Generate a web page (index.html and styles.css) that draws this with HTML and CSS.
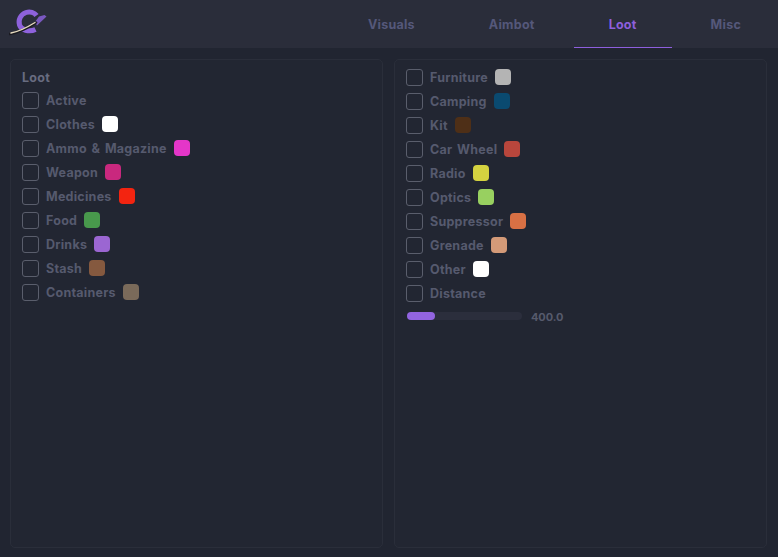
FILE: index.html
```html
<!DOCTYPE html>
<html lang="en">
<head>
<meta charset="utf-8">
<title>Loot</title>
<link rel="stylesheet" href="styles.css">
</head>
<body>
<header class="topbar">
  <svg class="logo" width="38" height="30" viewBox="0 0 38 30" aria-hidden="true">
    <path d="M27.5 8.5C25.5 5.5 21 4 17 5.5C11.5 7.5 9 13 10.5 18C12 23 20 25.5 26.5 22.5" fill="none" stroke="#8e62dc" stroke-width="5"/>
    <path d="M28 18.5L37.5 9.5L35.5 8L30 9.5L26 15Z" fill="#7a58c0"/>
    <path d="M1 27C9 25.5 19 21 27 15.5" fill="none" stroke="#1a1a20" stroke-width="2.6" stroke-linecap="round"/>
    <path d="M2 26C10 24.5 18 20.5 26 15.5" fill="none" stroke="#e8dcc0" stroke-width="1.4" stroke-linecap="round"/>
  </svg>
  <nav class="tabs">
    <a class="tab">Visuals</a>
    <a class="tab">Aimbot</a>
    <a class="tab tab-active">Loot</a>
    <a class="tab">Misc</a>
  </nav>
</header>
<main class="content">
  <section class="panel">
    <div class="panel-title">Loot</div>
    <div class="row"><span class="check"></span><span class="label">Active</span></div>
    <div class="row"><span class="check"></span><span class="label">Clothes</span><span class="swatch c-white"></span></div>
    <div class="row"><span class="check"></span><span class="label">Ammo &amp; Magazine</span><span class="swatch c-ammo"></span></div>
    <div class="row"><span class="check"></span><span class="label">Weapon</span><span class="swatch c-weapon"></span></div>
    <div class="row"><span class="check"></span><span class="label">Medicines</span><span class="swatch c-med"></span></div>
    <div class="row"><span class="check"></span><span class="label">Food</span><span class="swatch c-food"></span></div>
    <div class="row"><span class="check"></span><span class="label">Drinks</span><span class="swatch c-drinks"></span></div>
    <div class="row"><span class="check"></span><span class="label">Stash</span><span class="swatch c-stash"></span></div>
    <div class="row"><span class="check"></span><span class="label">Containers</span><span class="swatch c-cont"></span></div>
  </section>
  <section class="panel panel-right">
    <div class="row"><span class="check"></span><span class="label">Furniture</span><span class="swatch c-furn"></span></div>
    <div class="row"><span class="check"></span><span class="label">Camping</span><span class="swatch c-camp"></span></div>
    <div class="row"><span class="check"></span><span class="label">Kit</span><span class="swatch c-kit"></span></div>
    <div class="row"><span class="check"></span><span class="label">Car Wheel</span><span class="swatch c-car"></span></div>
    <div class="row"><span class="check"></span><span class="label">Radio</span><span class="swatch c-radio"></span></div>
    <div class="row"><span class="check"></span><span class="label">Optics</span><span class="swatch c-optics"></span></div>
    <div class="row"><span class="check"></span><span class="label">Suppressor</span><span class="swatch c-supp"></span></div>
    <div class="row"><span class="check"></span><span class="label">Grenade</span><span class="swatch c-gren"></span></div>
    <div class="row"><span class="check"></span><span class="label">Other</span><span class="swatch c-white"></span></div>
    <div class="row"><span class="check"></span><span class="label">Distance</span></div>
    <div class="slider-row">
      <div class="track"><div class="fill"></div></div>
      <span class="value">400.0</span>
    </div>
  </section>
</main>
</body>
</html>
```
FILE: styles.css
```css
* { box-sizing: border-box; }
html, body { margin: 0; height: 100%; }
body {
  width: 778px;
  height: 557px;
  overflow: hidden;
  background: #212531;
  font-family: Inter, "Liberation Sans", sans-serif;
  font-size: 12.5px;
  font-weight: 700;
  letter-spacing: 0.25px;
  word-spacing: 1.5px;
  color: #565a6e;
  display: flex;
  flex-direction: column;
}
.topbar {
  height: 48px;
  flex: none;
  background: #2a2d3a;
  display: flex;
  align-items: stretch;
  justify-content: space-between;
  padding-left: 9px;
  padding-right: 2px;
}
.logo { margin-top: 7px; }
.tabs { display: flex; gap: 4px; }
.tab {
  padding: 0 35px;
  line-height: 50px;
  height: 48px;
  color: #55587a;
  cursor: pointer;
}
.tab-active {
  color: #8e5fdd;
  box-shadow: inset 0 -1px 0 #8e5fdd;
}
.content {
  flex: 1;
  display: flex;
  gap: 11px;
  padding: 11px 11px 9px 10px;
}
.panel {
  flex: 1;
  border: 1px solid #2a2e3a;
  border-radius: 5px;
  background: #222632;
  padding: 9px 11px;
}
.panel-right { padding-top: 5px; }
.panel-title {
  height: 16px;
  line-height: 18px;
  color: #686c80;
  margin-bottom: 3px;
}
.row {
  height: 24px;
  display: flex;
  align-items: center;
}
.check {
  width: 17px;
  height: 17px;
  flex: none;
  border: 1px solid #5a5e6c;
  border-radius: 3px;
  margin-right: 7px;
}
.swatch {
  width: 16px;
  height: 16px;
  flex: none;
  border-radius: 4px;
  margin-left: 7px;
}
.slider-row {
  display: flex;
  align-items: center;
  height: 24px;
}
.track {
  width: 115px;
  height: 8px;
  margin-left: 1px;
  margin-bottom: 3px;
  border-radius: 4px;
  background: #2b2e3c;
}
.fill {
  width: 28px;
  height: 100%;
  border-radius: 4px;
  background: #9264e0;
}
.value { margin-left: 9px; font-size: 11px; letter-spacing: -0.1px; color: #565a6c; }
.c-white { background: #ffffff; }
.c-ammo { background: #e436c8; }
.c-weapon { background: #c9287e; }
.c-med { background: #f32410; }
.c-food { background: #48984c; }
.c-drinks { background: #9b66d2; }
.c-stash { background: #85593f; }
.c-cont { background: #7a6a5a; }
.c-furn { background: #b4b4b4; }
.c-camp { background: #0a4a70; }
.c-kit { background: #4e2f17; }
.c-car { background: #b8463c; }
.c-radio { background: #d4d240; }
.c-optics { background: #98d060; }
.c-supp { background: #d87044; }
.c-gren { background: #d49a78; }
```
